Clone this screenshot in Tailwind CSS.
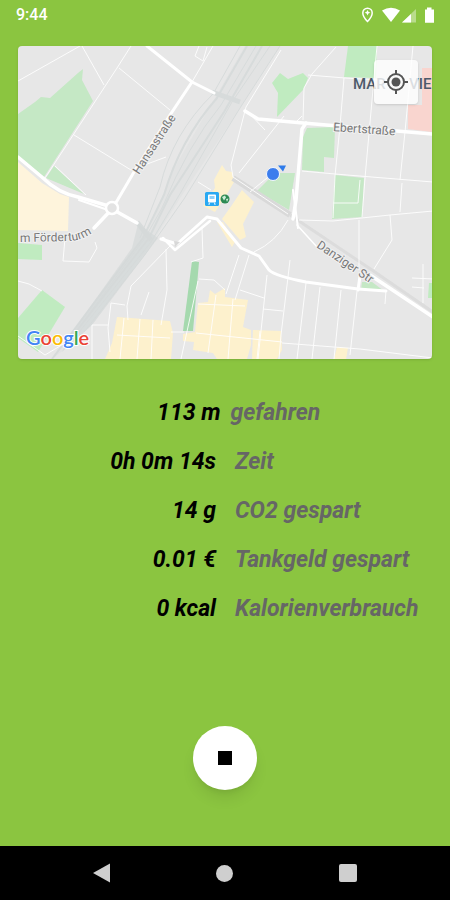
<!DOCTYPE html>
<html lang="de">
<head>
  <meta charset="UTF-8" />
  <meta name="viewport" content="width=device-width, initial-scale=1.0"/>
  <title>Fahrt</title>
  <script src="https://cdn.jsdelivr.net/npm/@tailwindcss/browser@4"></script>
</head>
<body class="bg-[#8bc540] min-h-screen flex flex-col font-['Roboto',sans-serif]">

  <!-- Status bar -->
  <header class="flex items-center justify-between h-[30px] px-4 text-white">
    <span class="text-base font-medium">9:44</span>
    <svg class="w-[74px] h-4" viewBox="360 6 74 16" fill="#fff" aria-hidden="true">
      <path d="M367.500 7.200a4.700 4.700 0 0 0-4.700 4.700c0 3.500 4.700 8.600 4.700 8.600s4.700-5.100 4.700-8.600a4.700 4.700 0 0 0-4.700-4.700z" fill="none" stroke="#fff" stroke-width="1.500"/>
      <path d="M367.500 9l.9 1.800 1.900.9-1.900.9-.9 1.800-.9-1.800-1.900-.9 1.900-.9z"/>
      <path d="M382 9.500q9-5.500 18 0l-9 11.500z"/>
      <path d="M416 8v13.500h-14z" opacity=".4"/>
      <path d="M411 13v8.500h-9z"/>
      <path d="M427 6.500h4.500v2h2.500v13.300h-9V8.500h2z"/>
    </svg>
  </header>

  <main class="flex flex-1 flex-col items-center pt-4 pb-14">
    <!-- Map -->
    <section class="w-full px-[18px]" aria-label="Karte">
      <div class="relative overflow-hidden rounded-sm bg-[#e7e7e7] shadow">
        <svg class="block w-full" viewBox="18 46 414 313" role="img" aria-label="Aktuelle Position">
          <!-- Parks -->
          <g fill="#c5e8c5">
            <path d="M18 114L35 102 41 97 50 98 78 73 83 69 82 80 93 101 44 177 18 156z"/>
            <path d="M54 166L84 194 46 178z"/>
            <path d="M307 128L335 127 334 158 324 157 324 172 302 170 303 137z"/>
            <path d="M275 173L295 173 289 210 257 191z"/>
            <path d="M335 175L364 178 362 217 332 219z"/>
            <path d="M362 282L372 282 384 291 361 290z"/>
          </g>
          <g fill="#c0ecc0">
            <path d="M348 46L377 46 376 78 344 77z"/>
            <path d="M272 83L280 73 288 79 303 73 308 78 303 90 277 117 278 93z"/>
            <path d="M18 243L42 245 42 260 18 259z"/>
            <path d="M42 290L65 307 38 352 18 338V318z"/>
            <path d="M429 283h4v15h-5z"/>
          </g>
          <path d="M192 261L199 262 193 331 183 331z" fill="#a5d9ae"/>
          <!-- Built-up areas -->
          <g fill="#fdf1cd">
            <path d="M18 162L42 183 60 194 69 197 68 231 18 230z" fill="#fef4dc"/>
            <path d="M117 317L170 321 173 333 171 359H105L112 343z"/>
            <path d="M225 288L215 294 210 290 208 302 198 303 195 332 183 334V341L194 342 193 350 213 353 217 359H247L251 345 251 330 243 327 248 300 225 297z"/>
            <path d="M253 330L281 331 282 350 277 359H252z"/>
            <path d="M337 347L348 348 346 359H334z"/>
            <path d="M222 165L226 171 232 172 234 182 224 199 215 212 203 206 215 188 214 180z"/>
            <path d="M242 190L254 202 243 224 246 237 240 240 222 219 232 205z"/>
            <path d="M217 222L223 222 235 242 232 247z"/>
          </g>
          <path d="M422 68h11v64l-25-3v-24h14z" fill="#f9d5cf"/>

          <!-- Railway -->
          <path d="M245 46L280 46 240 108 184 192 150 246 92 325 70 345 52 359 148 232 172 172z" fill="#dfe1e1" opacity=".7"/>
          <g fill="none" stroke="#d7dbdb">
            <path d="M240 46L213 94Q172 134 160 187L140 238" />
            <path d="M247 46L217 98Q180 140 164 195L143 238 52 359" stroke-width="2"/>
            <path d="M256 46L221 105Q188 145 162 208L145 238 66 345"/>
            <path d="M262 46L224 112 170 195 149 238 72 337" stroke-width="2"/>
            <path d="M270 46L232 102 181 192 151 242 76 336"/>
            <path d="M280 46L240 108 184 199 144 256 84 332"/>
            <path d="M212 92L240 102M151 240L137 222" stroke-width="5"/>
          </g>
          <path d="M138 224L158 238 92 325 62 352 70 335 132 248z" fill="#d4d8d8" opacity=".7"/>
          <path d="M233 178L290 215" fill="none" stroke="#d9d9d9" stroke-width="6"/>
          <path d="M290 215L372 270 433 312" fill="none" stroke="#dcdcdc" stroke-width="3"/>

          <!-- Side streets -->
          <g fill="none" stroke="#fff" stroke-linejoin="round" opacity=".85">
            <path d="M18 81L80 46M82 46L104 85M131 46L117 68 45 178M119 68L170 110M74 135L131 170 166 157M55 166L86 195M213 46L192 82M199 46L195 56 203 61 207 47"/>
            <path d="M281 50L246 107 231 165 233 177 288 214M239 173L284 116M336 47L312 74 304 88 303 120M308 75L345 78 415 82M377 46L374 78 365 178 362 217M413 46L405 132 400 180M344 78L340 126 335 176 333 218M302 116L294 124M273 173L250 192"/>
            <path d="M248 112L265 130M302 171L335 174 433 182M360 180L358 203 333 203"/>
            <path d="M299 220L333 221 390 215 433 211M390 215L392 240 374 269M359 220V270M402 183L400 212"/>
            <path d="M65 238L63 261 89 262 97 248 95 242M18 281L29 284 42 291M18 336L45 355 70 340"/>
            <path d="M170 246L131 286 127 306 128 320M166 249L167 290 161 325M149 292L141 315M125 305L111 303 108 328 110 352M92 325L108 325M92 325L92 359M202 228L203 258 191 262M199 279L214 280 225 290M198 281L181 359M171 332L184 332"/>
            <path d="M117 335L170 338M124 318L120 359M140 319L137 359M153 320L151 359M198 304L245 306M196 333L282 342M216 295L208 353M233 299L228 359M260 331L257 359"/>
            <path d="M288 220Q276 242 254 252M239 255L226 294M249 255L235 300M267 275L258 359M290 260L288 277 281 335 279 359M306 283L297 359M320 287L312 359M341 290L334 359M357 291L350 355M240 290L264 298M263 309L283 311M282 343L360 349 433 358M412 278L434 279M423 264V303M412 287L424 288M386 290L385 304"/>
            <path d="M198 182L211 190"/>
          </g>
          <!-- Main roads -->
          <g fill="none" stroke="#fff" stroke-linecap="round" stroke-linejoin="round">
            <path d="M147 46L192 82 214 93" stroke-width="3"/>
            <path d="M192 82L170 115 134 172 114 206" stroke-width="3"/>
            <path d="M18 157L43 178Q58 193 78 197L112 207" stroke-width="3.500"/>
            <path d="M112 209L137 223M112 209L94 228" stroke-width="3.500"/>
            <path d="M79 200L108 210" stroke-width="2"/>
            <path d="M245 111L258 119 303 123 433 134" stroke-width="3.500"/>
            <path d="M306 123L302 129 296 200 293 219" stroke-width="3.500"/>
            <path d="M293 190L298 228" stroke-width="2"/>
            <path d="M297 225L317 247" stroke-width="1.500"/>
            <path d="M370 275L400 295 433 317" stroke-width="3.500"/>
            <path d="M358 290L360 276" stroke-width="3"/>
            <path d="M161 239L177 244 207 217 217 219 241 248 259 256 269 270Q275 276 306 282L358 289 386 291" stroke-width="3"/>
            <path d="M163 238L175 250 210 221" stroke-width="2.500"/>
          </g>
          <path d="M174 241l6 1-5 5z" fill="#d8d8d8"/>
          <circle cx="112" cy="208" r="6" fill="#e3e3e3" stroke="#fff" stroke-width="2.500"/>

          <!-- Station markers -->
          <rect x="205" y="192" width="14" height="14" rx="1.500" fill="#2aa9f2"/>
          <path d="M209 194.500h6a1 1 0 0 1 1 1v6a1 1 0 0 1-1 1h-6a1 1 0 0 1-1-1v-6a1 1 0 0 1 1-1zM209.500 202.500l-1.500 2h2zM214.500 202.500l1.500 2h-2z" fill="#fff"/>
          <path d="M209.500 196h5v3h-5z" fill="#8fd0f8"/>
          <circle cx="225" cy="199" r="4.500" fill="#2c8a53"/>
          <path d="M222 197l3-1.500 1 2-2 3zM226 199l2.500-.5-1.500 3.500z" fill="#cdeed9"/>

          <!-- Street names -->
          <path id="foerderturm" d="M20 242L70 241Q86 240 98 228" fill="none"/>
          <g class="text-[12px]" fill="#777" stroke="#f1f1f1" stroke-width="2" paint-order="stroke">
            <text transform="translate(139 175) rotate(-57)">Hansastraße</text>
            <text transform="translate(333 131) rotate(4)">Ebertstraße</text>
            <text transform="translate(316 247) rotate(34)">Danziger Str</text>
            <text><textPath href="#foerderturm">m Förderturm</textPath></text>
          </g>
          <g class="text-[15px] font-medium" fill="#4c5a6b">
            <text x="353" y="89">MAR</text>
            <text x="409" y="89">VIER</text>
          </g>

          <!-- Current position -->
          <path d="M278 165.500h8l-3 6z" fill="#2f7bea"/>
          <circle cx="273" cy="174" r="6.500" fill="#3b7ded" stroke="#f4f8ff"/>

          <text x="26" y="345" class="font-['Lato',sans-serif] text-[20px] font-semibold" stroke="#fff" stroke-width="2" paint-order="stroke"><tspan fill="#4285f4">G</tspan><tspan fill="#ea4335">o</tspan><tspan fill="#fbbc05">o</tspan><tspan fill="#4285f4">g</tspan><tspan fill="#34a853">l</tspan><tspan fill="#ea4335">e</tspan></text>
        </svg>
        <button type="button" aria-label="Mein Standort" class="absolute top-3.5 right-3.5 flex size-11 items-center justify-center rounded-sm bg-white/80 shadow">
          <svg class="size-6" viewBox="0 0 24 24" fill="none" stroke="#555" stroke-width="2">
            <circle cx="12" cy="12" r="8"/>
            <circle cx="12" cy="12" r="4.500" fill="#555" stroke="none"/>
            <path d="M12 0v4M12 20v4M0 12h4M20 12h4"/>
          </svg>
        </button>
      </div>
    </section>

    <!-- Trip stats -->
    <dl class="mt-[30px] w-full text-[23px] font-bold italic text-[#666]">
      <div class="flex h-[49px] items-center gap-2.5">
        <dd class="w-[49%] text-right text-black">113 m</dd>
        <dt>gefahren</dt>
      </div>
      <div class="flex h-[49px] items-center gap-[19px]">
        <dd class="w-[48%] text-right text-black">0h 0m 14s</dd>
        <dt>Zeit</dt>
      </div>
      <div class="flex h-[49px] items-center gap-[19px]">
        <dd class="w-[48%] text-right text-black">14 g</dd>
        <dt>CO2 gespart</dt>
      </div>
      <div class="flex h-[49px] items-center gap-[19px]">
        <dd class="w-[48%] text-right text-black">0.01 €</dd>
        <dt>Tankgeld gespart</dt>
      </div>
      <div class="flex h-[49px] items-center gap-[19px]">
        <dd class="w-[48%] text-right text-black">0 kcal</dd>
        <dt>Kalorienverbrauch</dt>
      </div>
    </dl>

    <button type="button" aria-label="Stopp" class="mt-auto flex size-16 items-center justify-center rounded-full bg-white shadow-lg">
      <span class="size-3.5 bg-black"></span>
    </button>
  </main>

  <!-- Navigation bar -->
  <nav class="grid h-[54px] grid-cols-3 bg-black px-10" aria-label="System">
    <button type="button" aria-label="Zurück" class="flex items-center justify-center">
      <svg class="size-5" viewBox="0 0 20 20" fill="#cfcfcf"><path d="M1 10L18 .500v19z"/></svg>
    </button>
    <button type="button" aria-label="Startseite" class="flex items-center justify-center">
      <span class="size-[17px] rounded-full bg-[#cfcfcf]"></span>
    </button>
    <button type="button" aria-label="Übersicht" class="flex items-center justify-center">
      <span class="size-[18px] rounded-xs bg-[#cfcfcf]"></span>
    </button>
  </nav>

</body>
</html>
